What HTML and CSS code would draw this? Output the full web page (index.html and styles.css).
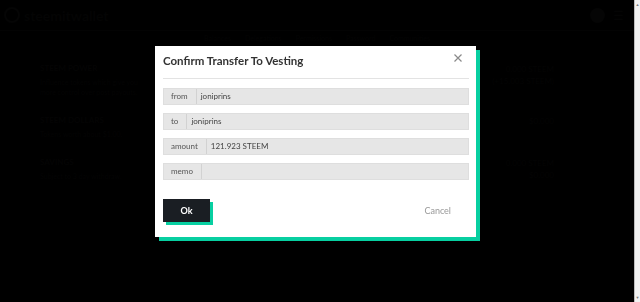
FILE: index.html
```html
<!DOCTYPE html>
<html lang="en">

<head>
    <meta charset="UTF-8">
    <meta name="viewport" content="width=device-width, initial-scale=1.0">
    <title>Steemit Wallet</title>
    <link rel="stylesheet" href="styles.css">
</head>

<body>
    <div class="page">
        <div class="main">
            <header class="topbar">
                <div class="brand">
                    <svg width="16" height="16" viewBox="0 0 16 16">
                        <circle cx="8" cy="8" r="7" fill="none" stroke="#050505" stroke-width="2" />
                    </svg>
                    <span>steemitwallet</span>
                </div>
                <div class="user">
                    <span class="avatar"></span>
                    <span class="burger">&#9776;</span>
                </div>
            </header>

            <nav class="tabs">
                <span>Balances</span>
                <span>Delegations</span>
                <span>Permissions</span>
                <span>Password</span>
                <span>Communities</span>
            </nav>

            <section class="wallet">
                <div class="wallet-row">
                    <div class="wallet-info">
                        <h3>STEEM POWER</h3>
                        <p>Influence tokens which give you more control over post payouts.</p>
                    </div>
                    <div class="wallet-value">
                        <span>0.000 STEEM</span>
                        <span>(+15.003 STEEM)</span>
                    </div>
                </div>
                <div class="wallet-row">
                    <div class="wallet-info">
                        <h3>STEEM DOLLARS</h3>
                        <p>Tokens worth about $1.00.</p>
                    </div>
                    <div class="wallet-value">
                        <span>$0.000</span>
                    </div>
                </div>
                <div class="wallet-row">
                    <div class="wallet-info">
                        <h3>SAVINGS</h3>
                        <p>Subject to 3 day withdraw.</p>
                    </div>
                    <div class="wallet-value">
                        <span>0.000 STEEM</span>
                        <span>$0.000</span>
                    </div>
                </div>
            </section>
        </div>

        <div class="scrollbar">
            <span class="arrow">&#9650;</span>
            <span class="arrow">&#9660;</span>
        </div>
    </div>

    <div class="overlay">
        <div class="modal">
            <div class="modal-head">
                <h2>Confirm Transfer To Vesting</h2>
                <button class="close" aria-label="Close">
                    <svg width="8" height="8" viewBox="0 0 8 8">
                        <path d="M0.5 0.5 L7.5 7.5 M7.5 0.5 L0.5 7.5" stroke="#8a8a8a" stroke-width="1.2" />
                    </svg>
                </button>
            </div>

            <div class="fields">
                <div class="field">
                    <span class="field-label">from</span>
                    <span class="field-value">joniprins</span>
                </div>
                <div class="field">
                    <span class="field-label">to</span>
                    <span class="field-value">joniprins</span>
                </div>
                <div class="field">
                    <span class="field-label">amount</span>
                    <span class="field-value">121.923 STEEM</span>
                </div>
                <div class="field">
                    <span class="field-label">memo</span>
                    <span class="field-value"></span>
                </div>
            </div>

            <div class="actions">
                <button class="ok">Ok</button>
                <button class="cancel">Cancel</button>
            </div>
        </div>
    </div>
</body>

</html>
```

FILE: styles.css
```css
body {
    margin: 0;
    background-color: #000000;
    font-family: "Lato", "Liberation Sans", sans-serif;
    color: #040404;
    height: 302px;
    overflow: hidden;
}

.page {
    display: flex;
    height: 302px;
}

.main {
    flex: 1;
}

.topbar {
    display: flex;
    justify-content: space-between;
    align-items: center;
    height: 30px;
    padding: 0 10px 0 4px;
    border-bottom: 1px solid #030303;
}

.brand {
    display: flex;
    align-items: center;
    gap: 4px;
    font-size: 14px;
    font-weight: 700;
}

.user {
    display: flex;
    align-items: center;
    gap: 8px;
}

.avatar {
    width: 15px;
    height: 15px;
    border-radius: 50%;
    background-color: #050505;
}

.burger {
    font-size: 12px;
}

.tabs {
    display: flex;
    justify-content: center;
    gap: 14px;
    font-size: 7px;
    padding: 3px 0;
}

.wallet {
    padding: 18px 40px 0 40px;
}

.wallet-row {
    display: flex;
    justify-content: space-between;
    margin-bottom: 18px;
}

.wallet-info {
    width: 108px;
}

.wallet-info h3 {
    margin: 0 0 4px 0;
    font-size: 8px;
}

.wallet-info p {
    margin: 0;
    font-size: 7px;
    line-height: 10px;
}

.wallet-value {
    display: flex;
    flex-direction: column;
    align-items: flex-end;
    font-size: 8px;
    line-height: 12px;
    padding-right: 40px;
}

.scrollbar {
    width: 5px;
    background-color: #f1f1f1;
    border-left: 1px solid #bdbdbd;
    display: flex;
    flex-direction: column;
    justify-content: space-between;
    align-items: center;
    color: #7a7a7a;
    font-size: 4px;
    padding: 2px 0;
}

/* modal */

.overlay {
    position: fixed;
    top: 0;
    left: 0;
    right: 6px;
    bottom: 0;
    display: flex;
    align-items: flex-start;
    padding: 46px 0 0 155px;
}

.modal {
    width: 321px;
    box-sizing: border-box;
    padding: 5px 7px 15px 8px;
    background-color: #ffffff;
    box-shadow: 4px 4px 0 #07cfa1;
    color: #333333;
}

.modal-head {
    display: flex;
    justify-content: space-between;
    align-items: flex-start;
    padding-bottom: 7px;
    border-bottom: 1px solid #e3e3e3;
}

.modal-head h2 {
    margin: 0;
    font-size: 11.5px;
    line-height: 20px;
    font-weight: 700;
    color: #333333;
}

.close {
    margin: 3px 7px 0 0;
    padding: 0;
    border: none;
    background: none;
    display: flex;
}

.fields {
    display: flex;
    flex-direction: column;
    gap: 8px;
    margin-top: 9px;
}

.field {
    display: flex;
    height: 17px;
    box-sizing: border-box;
    background-color: #e6e6e6;
    border: 1px solid #dedede;
    font-size: 8px;
    line-height: 15px;
}

.field-label {
    padding: 0 8px 0 7px;
    border-right: 1px solid #d2d2d2;
    color: #555555;
}

.field-value {
    padding-left: 4px;
    color: #444444;
}

.actions {
    display: flex;
    justify-content: space-between;
    align-items: center;
    margin-top: 19px;
}

.ok {
    width: 47px;
    height: 23px;
    border: none;
    background-color: #1a1e23;
    color: #ffffff;
    font-family: "Lato", "Liberation Sans", sans-serif;
    font-size: 9px;
    font-weight: 700;
    box-shadow: 3px 3px 0 #07cfa1;
    cursor: pointer;
}

.cancel {
    border: none;
    background: none;
    font-family: "Lato", "Liberation Sans", sans-serif;
    font-size: 9px;
    color: #999999;
    padding: 0 18px 0 0;
    cursor: pointer;
}
```
